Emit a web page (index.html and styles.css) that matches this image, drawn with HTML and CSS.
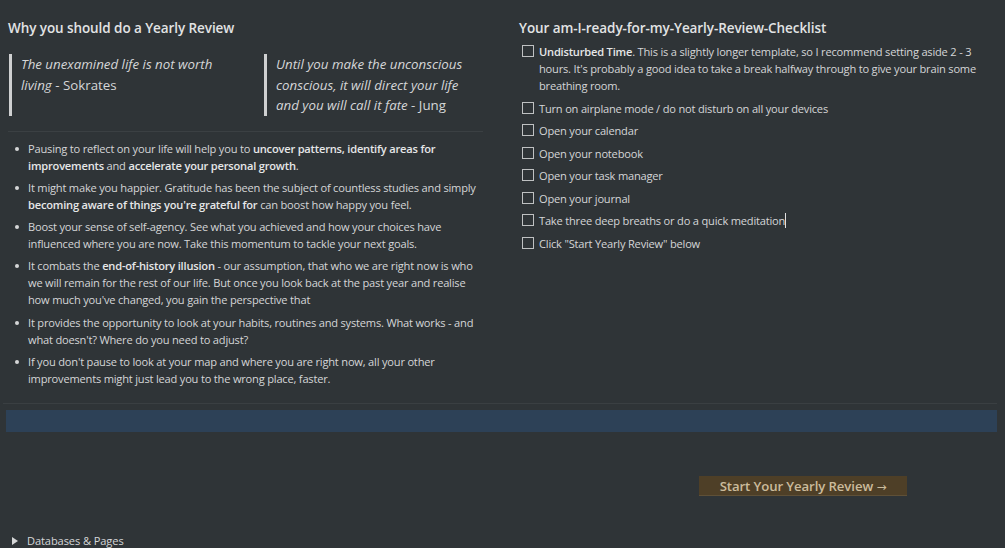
FILE: index.html
```html
<!DOCTYPE html>
<html lang="en">
<head>
<meta charset="utf-8">
<title>Yearly Review</title>
<link rel="stylesheet" href="styles.css">
</head>
<body>
<div class="page">
  <div class="columns">
    <section class="col-left">
      <h2 class="heading">Why you should do a Yearly Review</h2>
      <div class="quotes">
        <blockquote class="quote"><em>The unexamined life is not worth living</em> - Sokrates</blockquote>
        <blockquote class="quote"><em>Until you make the unconscious conscious, it will direct your life and you will call it fate</em> - Jung</blockquote>
      </div>
      <hr class="divider">
      <ul class="bullets">
        <li>Pausing to reflect on your life will help you to <b>uncover patterns, identify areas for improvements</b> and <b>accelerate your personal growth</b>.</li>
        <li>It might make you happier. Gratitude has been the subject of countless studies and simply <b>becoming aware of things you're grateful for</b> can boost how happy you feel.</li>
        <li>Boost your sense of self-agency. See what you achieved and how your choices have influenced where you are now. Take this momentum to tackle your next goals.</li>
        <li>It combats the <b>end-of-history illusion</b> - our assumption, that who we are right now is who we will remain for the rest of our life. But once you look back at the past year and realise how much you've changed, you gain the perspective that</li>
        <li>It provides the opportunity to look at your habits, routines and systems. What works - and what doesn't? Where do you need to adjust?</li>
        <li>If you don't pause to look at your map and where you are right now, all your other improvements might just lead you to the wrong place, faster.</li>
      </ul>
    </section>
    <section class="col-right">
      <h2 class="heading">Your am-I-ready-for-my-Yearly-Review-Checklist</h2>
      <ul class="checklist">
        <li><span class="box"></span><span class="txt"><b>Undisturbed Time</b>. This is a slightly longer template, so I recommend setting aside 2 - 3 hours. It's probably a good idea to take a break halfway through to give your brain some breathing room.</span></li>
        <li><span class="box"></span><span class="txt">Turn on airplane mode / do not disturb on all your devices</span></li>
        <li><span class="box"></span><span class="txt">Open your calendar</span></li>
        <li><span class="box"></span><span class="txt">Open your notebook</span></li>
        <li><span class="box"></span><span class="txt">Open your task manager</span></li>
        <li><span class="box"></span><span class="txt">Open your journal</span></li>
        <li><span class="box"></span><span class="txt"><span class="caret">Take three deep breaths or do a quick meditation</span></span></li>
        <li><span class="box"></span><span class="txt">Click "Start Yearly Review" below</span></li>
      </ul>
    </section>
  </div>
  <hr class="rule">
  <div class="bluebar"></div>
  <div class="button-row">
    <div class="start-btn">Start Your Yearly Review <span class="arrow">→</span></div>
  </div>
  <div class="toggle"><span class="tri"></span>Databases &amp; Pages</div>
</div>
</body>
</html>
```
FILE: styles.css
```css
* { box-sizing: border-box; }
html, body {
  margin: 0;
  padding: 0;
  background: #2f3437;
  height: 100%;
  overflow: hidden;
}
body {
  font-family: "Open Sans", "Noto Sans", sans-serif;
  color: #d5d6d7;
  font-size: 11.1px;
}
.page {
  padding: 0 8px 0 3px;
}
.columns {
  display: grid;
  grid-template-columns: 475px 1fr;
  gap: 36px;
  padding-left: 5px;
}
.heading {
  margin: 0;
  font-size: 13.5px;
  font-weight: 600;
  line-height: 20px;
  padding-top: 18px;
  color: #e2e3e4;
  letter-spacing: -0.08px;
}
.quotes {
  display: grid;
  grid-template-columns: 219px 219px;
  gap: 36px;
  margin: 16px 0 0 1px;
}
.quote {
  margin: 0;
  border-left: 3px solid #cfd0d1;
  padding: 0 0 0 9px;
  font-size: 13.3px;
  line-height: 20.5px;
  color: #d5d6d7;
}
.quote em { font-style: italic; }
.divider {
  border: 0;
  border-top: 1px solid #3b4043;
  margin: 15px 0 0 0;
  width: 475px;
}
.bullets {
  list-style: none;
  margin: 8px 0 0 0;
  padding: 0 0 0 20px;
}
.bullets li {
  position: relative;
  line-height: 17px;
  margin-bottom: 5.3px;
  width: 452px;
  letter-spacing: -0.2px;
}
.bullets li::before {
  content: "";
  position: absolute;
  left: -13px;
  top: 7px;
  width: 4px;
  height: 4px;
  border-radius: 50%;
  background: #d5d6d7;
}
b { font-weight: 600; color: #e6e7e8; }
.checklist {
  list-style: none;
  margin: 5px 0 0 0;
  padding: 0;
}
.checklist li {
  display: flex;
  align-items: flex-start;
  line-height: 17.2px;
  margin-bottom: 5.3px;
  letter-spacing: -0.2px;
}
.box {
  flex: none;
  width: 12px;
  height: 12px;
  border: 1px solid #bfc1c2;
  margin: 2px 5px 0 3px;
}
.txt { width: 446px; }
.caret { border-right: 1px solid #e0e0e0; }
.rule {
  border: 0;
  border-top: 1px solid #3a3f42;
  margin: 11px 0 0 0;
}
.bluebar {
  margin: 6px 0 0 3px;
  height: 22px;
  background: #2d4157;
}
.button-row {
  display: flex;
  padding-left: 696px;
  margin-top: 44px;
}
.start-btn {
  width: 208px;
  height: 20px;
  background: #4e3f27;
  border-bottom: 1px solid #5f5037;
  color: #cbbb9c;
  font-size: 13.2px;
  font-weight: 600;
  line-height: 20px;
  text-align: center;
  letter-spacing: -0.1px;
}
.arrow {
  font-family: "DejaVu Sans", sans-serif;
  font-weight: normal;
  font-size: 12px;
}
.toggle {
  margin-top: 38px;
  padding-left: 24px;
  position: relative;
  font-size: 11.1px;
  line-height: 14px;
  letter-spacing: -0.1px;
}
.tri {
  position: absolute;
  left: 9px;
  top: 3px;
  width: 0;
  height: 0;
  border-left: 6px solid #d5d6d7;
  border-top: 4px solid transparent;
  border-bottom: 4px solid transparent;
}
```
